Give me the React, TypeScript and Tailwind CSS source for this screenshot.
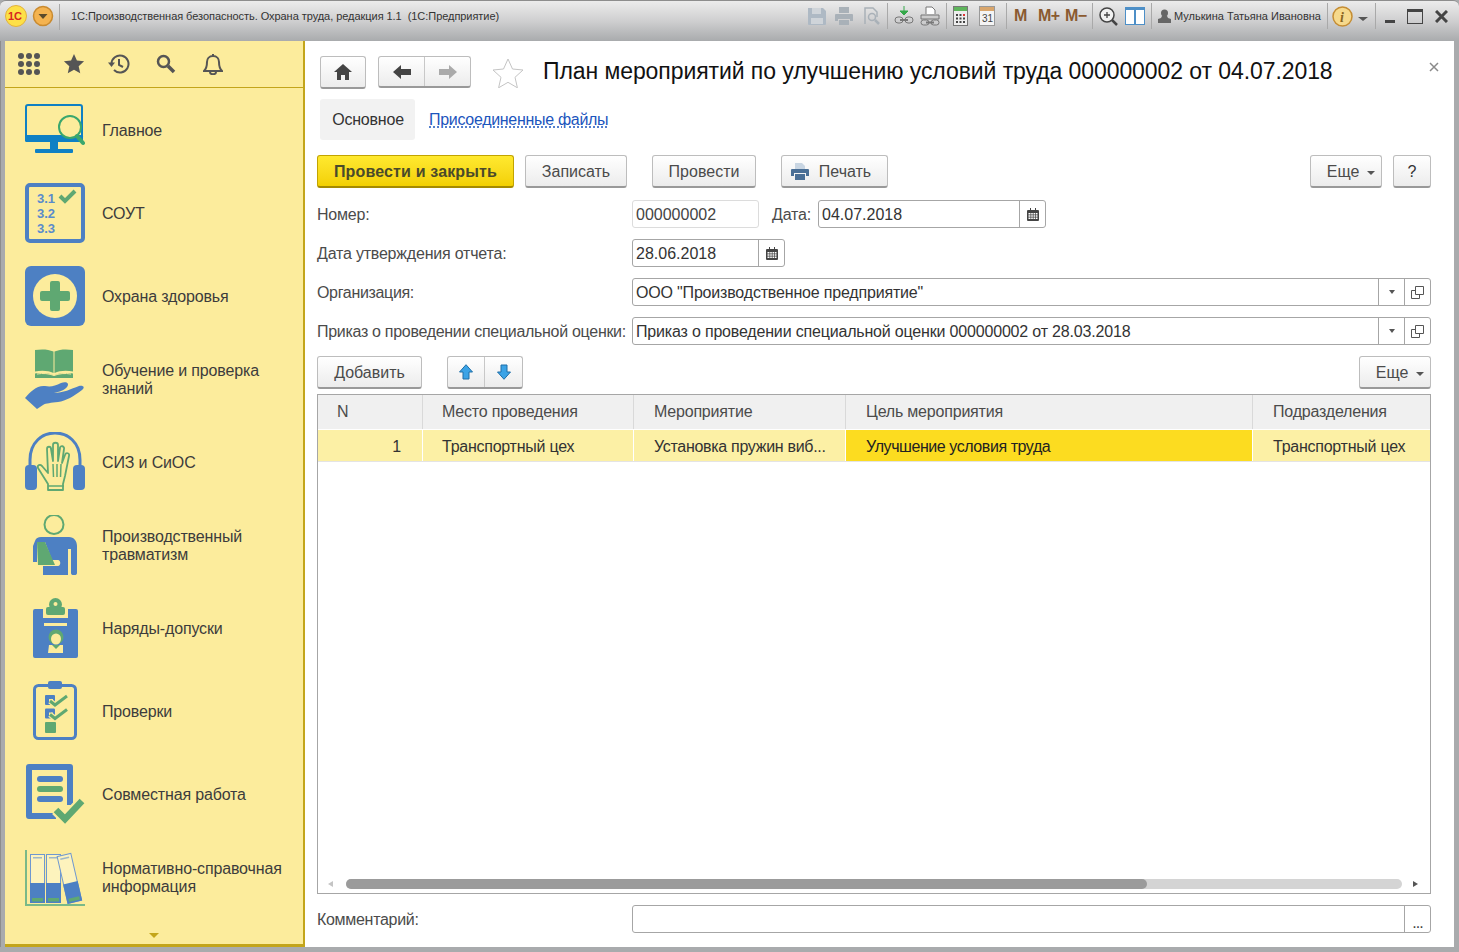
import React from "react";

const BLUE = "#4d80c3";
const GREEN = "#5fa872";
const YEL = "#fcec9c";

function Btn({ className = "", primary = false, children }: { className?: string; primary?: boolean; children: React.ReactNode }) {
  const tone = primary
    ? "border-[#c2a400] border-b-[#a58a00] from-[#ffe92e] to-[#f3d000] text-[#4a4a2a]"
    : "border-[#bdbdbd] border-b-[#999] from-white to-[#ececec] text-[#4b4b4b]";
  return (
    <div className={`flex h-[33px] items-center justify-center rounded-[3px] border border-b-2 bg-linear-to-b tracking-normal ${tone} ${className}`}>
      {children}
    </div>
  );
}

function Caret() {
  return <span className="ml-2 mt-[2px] h-0 w-0 border-x-[4px] border-t-[4px] border-x-transparent border-t-[#555]" />;
}

function Calendar() {
  return (
    <svg width="12" height="13" viewBox="0 0 12 13" fill="#444">
      <path d="M1 2h2V0h1v2h4V0h1v2h2a1 1 0 0 1 1 1v9a1 1 0 0 1-1 1H1a1 1 0 0 1-1-1V3a1 1 0 0 1 1-1z" />
      <path
        fill="#fff"
        d="M1.5 5h2v1.5h-2zM4.2 5h1.6v1.5H4.200zM6.500 5h1.500v1.500H6.500zM8.700 5h1.800v1.500H8.700zM1.500 7.300h2v1.500h-2zM4.200 7.300h1.600v1.500H4.200zM6.500 7.300h1.500v1.500H6.500zM8.700 7.300h1.800v1.500H8.700zM1.500 9.600h2v1.500h-2zM4.200 9.600h1.600v1.500H4.200zM6.500 9.600h1.500v1.500H6.500zM8.700 9.600h1.800v1.500H8.700z"
      />
    </svg>
  );
}

function OpenIcon() {
  return (
    <svg width="13" height="13" viewBox="0 0 13 13" fill="none" stroke="#555">
      <path d="M4.500 .5h8v8h-8z" />
      <path d="M4.500 4.500h-4v8h8v-4" />
    </svg>
  );
}

function SelectField({ value }: { value: string }) {
  return (
    <div className="ml-auto flex h-[28px] w-[799px] items-center rounded-[3px] border border-[#a6a6a6] text-[#333]">
      <span className="flex-1 pl-[3px] pt-[2px] tracking-[-0.18px]">{value}</span>
      <span className="flex h-full w-[26px] items-center justify-center border-l border-[#a6a6a6]">
        <span className="h-0 w-0 border-x-[3px] border-t-[4px] border-x-transparent border-t-[#555]" />
      </span>
      <span className="flex h-full w-[26px] items-center justify-center border-l border-[#a6a6a6]">
        <OpenIcon />
      </span>
    </div>
  );
}

function IconMain() {
  return (
    <svg width="60" height="60" viewBox="0 0 60 60" fill="none">
      <rect x="1" y="5" width="56" height="35" rx="2" stroke="#0f80c4" strokeWidth="2" />
      <rect x="0" y="35" width="58" height="7" rx="1.500" fill="#0f80c4" />
      <rect x="25" y="42" width="8" height="7" fill="#0f80c4" />
      <rect x="10" y="49" width="38" height="4" rx="1" fill="#0f80c4" />
      <circle cx="45" cy="27" r="11" fill={YEL} stroke="#3aa76d" strokeWidth="2" />
      <path d="M52 36l6 7" stroke="#3aa76d" strokeWidth="4" strokeLinecap="round" />
    </svg>
  );
}

function IconSout() {
  const rows = [
    ["3.1", 20],
    ["3.2", 35],
    ["3.3", 50],
  ] as const;
  return (
    <svg width="60" height="60" viewBox="0 0 60 60" fill="none">
      <rect x="2" y="2" width="56" height="56" rx="3" stroke={BLUE} strokeWidth="4" />
      {rows.map(([t, y]) => (
        <text key={t} x="12" y={y} fill="#5a8bcb" fontSize="13" fontWeight="700" fontFamily="'Liberation Sans', sans-serif">
          {t}
        </text>
      ))}
      <path d="M35 13l5 5 10-10" stroke={GREEN} strokeWidth="4" />
    </svg>
  );
}

function IconHealth() {
  return (
    <svg width="60" height="60" viewBox="0 0 60 60">
      <rect width="60" height="60" rx="6" fill={BLUE} />
      <circle cx="30" cy="30" r="22" fill={YEL} />
      <path d="M25 17a2 2 0 0 1 2-2h6a2 2 0 0 1 2 2v8h8a2 2 0 0 1 2 2v6a2 2 0 0 1-2 2h-8v8a2 2 0 0 1-2 2h-6a2 2 0 0 1-2-2v-8h-8a2 2 0 0 1-2-2v-6a2 2 0 0 1 2-2h8z" fill={GREEN} />
    </svg>
  );
}

function IconLearn() {
  return (
    <svg width="60" height="60" viewBox="0 0 60 60" fill="none">
      <path d="M10 1c6-1 13-1 18.500 1.500V24c-5-2.500-12-3-18.500-1.500zM48 1c-6-1-13-1-18.500 1.500V24c5-2.500 12-3 18.500-1.500z" fill={GREEN} />
      <path d="M10 24.500c6-1 14-.5 19 2 5-2.500 13-3 19-2V29H10z" fill={GREEN} />
      <path d="M12 25c6-1 12-.5 17 1.500 5-2 11-2.500 17-1.500" stroke={YEL} strokeWidth="1" />
      <path d="M0 49C5 43 12 36 20 37C26 38 30 37 36 34C41 32 45 34 42 38C40 41 34 43 29 44C38 44 46 40 54 37C59 36 60 39 57 41C49 47 41 52 33 53C26 54 21 54 18 56L12 60Z" fill={BLUE} />
    </svg>
  );
}

function IconSiz() {
  return (
    <svg width="60" height="60" viewBox="0 0 60 60" fill="none">
      <path d="M5 36V28C5 -8 55 -8 55 28V36" stroke={BLUE} strokeWidth="3" />
      <rect x="0" y="33" width="12" height="25" rx="4" fill={BLUE} />
      <rect x="48" y="33" width="12" height="25" rx="4" fill={BLUE} />
      <path
        d="M23 58V52L13 36c-1-3 2-4 4-2l6 7-1-24c0-3 4-3 4 0l2 12V13c0-3 5-3 5 0v16l2-13c0-3 5-2 4 1l-2 14 3-8c1-3 5-2 4 1l-4 20-2 8v6z"
        stroke={GREEN}
        strokeWidth="1.800"
        strokeLinejoin="round"
      />
      <path d="M23 54h16" stroke={GREEN} strokeWidth="1.500" />
      <path d="M28 32l.5 13M32 32v13M36 32l-.5 13" stroke={GREEN} strokeWidth="1.500" />
    </svg>
  );
}

function IconTrauma() {
  return (
    <svg width="60" height="60" viewBox="0 0 60 60" fill="none">
      <circle cx="29" cy="9.500" r="9.500" stroke={GREEN} strokeWidth="2" />
      <path d="M10 26C11 23 13 22 16 22H44C49 22 52 26 52 31V58C52 61 46 61 46 58V34H43V60H18V51H33C36 51 36 45 33 45H27L20 27H12V47H8V31Z" fill={BLUE} />
      <path d="M12 27h8l10 23H13z" fill={GREEN} />
    </svg>
  );
}

function IconPermit() {
  return (
    <svg width="60" height="60" viewBox="0 0 60 60">
      <path d="M10 11H18V20H43V11H51a2 2 0 0 1 2 2V58a2 2 0 0 1-2 2H10a2 2 0 0 1-2-2V13a2 2 0 0 1 2-2z" fill={BLUE} />
      <rect x="21" y="9" width="19" height="8" rx="2" fill={GREEN} />
      <circle cx="30.500" cy="6.500" r="6.500" fill={GREEN} />
      <circle cx="30.500" cy="6" r="2" fill={YEL} />
      <rect x="19" y="25" width="23" height="3" fill={YEL} />
      <circle cx="31" cy="39" r="7.500" fill={GREEN} />
      <ellipse cx="31" cy="41" rx="5" ry="5.500" fill={YEL} />
      <path d="M24 47h14v8H23z" fill={YEL} />
      <path d="M27 47h8l-4 4z" fill={GREEN} />
    </svg>
  );
}

function IconCheck() {
  return (
    <svg width="60" height="60" viewBox="0 0 60 60" fill="none">
      <rect x="9.500" y="4.500" width="41" height="53" rx="4" stroke={BLUE} strokeWidth="3" />
      <rect x="23" y="0" width="14" height="8" rx="2" fill={BLUE} />
      <rect x="20" y="14" width="10" height="10" rx="1" fill={BLUE} />
      <rect x="20" y="27.500" width="10" height="10" rx="1" fill={BLUE} />
      <rect x="24" y="18" width="4" height="3" fill={YEL} />
      <rect x="24" y="31.500" width="4" height="3" fill={YEL} />
      <path d="M25 20l5 4 12-9M25 33.500l5 4 12-9" stroke={YEL} strokeWidth="5.500" />
      <path d="M25 20l5 4 12-9M25 33.500l5 4 12-9" stroke={GREEN} strokeWidth="3" />
      <rect x="20" y="41" width="11" height="11" rx="1" fill={GREEN} />
    </svg>
  );
}

function IconJoint() {
  return (
    <svg width="60" height="60" viewBox="0 0 60 60" fill="none">
      <path d="M31 52H4V3H45V41" stroke={BLUE} strokeWidth="6" strokeLinejoin="round" />
      <rect x="12" y="12" width="26" height="6" rx="3" fill={BLUE} />
      <rect x="12" y="22" width="26" height="6" rx="3" fill={GREEN} />
      <rect x="12" y="32" width="26" height="6" rx="3" fill={BLUE} />
      <path d="M31 46L40 55L57 37" stroke={YEL} strokeWidth="11" />
      <path d="M31 46L40 55L57 37" stroke={GREEN} strokeWidth="6.500" />
    </svg>
  );
}

function Binder({ x }: { x: number }) {
  return (
    <g>
      <rect x={x + 0.5} y="7.500" width="14" height="48" fill="#fdf3bd" stroke="#6f98d0" />
      <rect x={x + 3} y="10" width="9" height="1.500" fill="#9fb8c8" />
      <rect x={x} y="36" width="15" height="20" fill={BLUE} />
      <rect x={x + 2} y="51" width="11" height="3.500" fill={GREEN} />
    </g>
  );
}

function IconRefs() {
  return (
    <svg width="60" height="60" viewBox="0 0 60 60" fill="none">
      <path d="M1 3v55h59" stroke="#7ab988" strokeWidth="2" />
      <Binder x={5} />
      <Binder x={21} />
      <g transform="rotate(-13 44 32)">
        <Binder x={37} />
      </g>
    </svg>
  );
}

const NAV: [React.ReactNode, string[]][] = [
  [<IconMain />, ["Главное"]],
  [<IconSout />, ["СОУТ"]],
  [<IconHealth />, ["Охрана здоровья"]],
  [<IconLearn />, ["Обучение и проверка", "знаний"]],
  [<IconSiz />, ["СИЗ и СиОС"]],
  [<IconTrauma />, ["Производственный", "травматизм"]],
  [<IconPermit />, ["Наряды-допуски"]],
  [<IconCheck />, ["Проверки"]],
  [<IconJoint />, ["Совместная работа"]],
  [<IconRefs />, ["Нормативно-справочная", "информация"]],
];

function Sep({ className = "" }: { className?: string }) {
  return <span className={`h-[26px] w-px bg-[#a9a9a9] ${className}`} />;
}

function TitleBar() {
  return (
    <div className="flex h-[41px] shrink-0 items-start rounded-t-[6px] border-t border-[#8d8d8d] bg-linear-to-b from-[#ececec] via-[#cfcfd0] to-[#a9abad] pt-[2px]">
      <svg className="ml-[5px] mt-[2px]" width="22" height="22" viewBox="0 0 22 22">
        <circle cx="11" cy="11" r="10.500" fill="#fde047" stroke="#e2b13c" />
        <text x="3" y="15" fontSize="11" fontWeight="700" fill="#d7261e" fontFamily="'Liberation Sans', sans-serif">
          1С
        </text>
      </svg>
      <svg className="ml-[5px] mt-[2px]" width="22" height="22" viewBox="0 0 22 22">
        <circle cx="11" cy="11" r="9.500" fill="#f4b350" stroke="#c98a2f" strokeWidth="1.500" />
        <path d="M6.500 9h9L11 14z" fill="#5b4a2b" />
      </svg>
      <Sep className="ml-[5px] mt-[1px]" />
      <span className="ml-[11px] mt-[5px] whitespace-pre text-[11px] leading-[16px] tracking-[-0.05px] text-[#333]">
        1С:Производственная безопасность. Охрана труда, редакция 1.1  (1С:Предприятие)
      </span>

      <div className="ml-auto flex items-center">
        <svg width="18" height="18" viewBox="0 0 18 18" fill="#aeb9c4">
          <path d="M0 1h15l3 3v13a1 1 0 0 1-1 1H1a1 1 0 0 1-1-1z" />
          <path d="M4 1h9v6H4zM3 11h12v6H3z" fill="#cfd4d9" />
        </svg>
        <svg className="ml-[9px]" width="18" height="18" viewBox="0 0 18 18" fill="#a9b1b8">
          <path d="M4 0h10v6H4zM1 7h16a1 1 0 0 1 1 1v6h-3v-2H3v2H0V8a1 1 0 0 1 1-1zM4 13h10v5H4z" />
        </svg>
        <svg className="ml-[10px]" width="18" height="18" viewBox="0 0 18 18" fill="none" stroke="#a9b1b8" strokeWidth="1.500">
          <path d="M2 17V1h8l4 4v5" />
          <circle cx="9" cy="10" r="3.500" />
          <path d="M12 13l4 4" strokeWidth="2.500" />
        </svg>
        <Sep className="ml-[6px]" />
        <svg className="ml-[6px]" width="20" height="20" viewBox="0 0 20 20" fill="none" stroke="#777">
          <path d="M10 0v5H6l4 4 4-4h-4" fill="#35a84a" stroke="#35a84a" />
          <rect x="1" y="11" width="8" height="6" rx="3" />
          <rect x="11" y="11" width="8" height="6" rx="3" />
          <path d="M6 14h8" strokeWidth="2" />
        </svg>
        <svg className="ml-[6px]" width="20" height="20" viewBox="0 0 20 20" fill="none" stroke="#777">
          <path d="M6 8V1h6l3 3v4" fill="#fff" />
          <path d="M1 9h18v4H1z" fill="#ccc" />
          <rect x="1" y="14" width="8" height="5" rx="2.500" />
          <rect x="11" y="14" width="8" height="5" rx="2.500" />
          <path d="M6 16.500h8" strokeWidth="2" />
        </svg>
        <Sep className="ml-[6px]" />
        <svg className="ml-[6px]" width="15" height="20" viewBox="0 0 15 20">
          <rect x=".5" y=".5" width="14" height="19" fill="#eee" stroke="#777" />
          <rect x="1" y="1" width="13" height="4" fill="#5fb55c" />
          <path d="M3 8h2v2H3zM6.500 8h2v2h-2zM3 11.500h2v2H3zM6.500 11.500h2v2h-2zM10 11.500h2v2h-2zM3 15h2v2H3zM6.500 15h2v2h-2zM10 15h2v2h-2z" fill="#444" />
          <path d="M10 8h2v2h-2z" fill="#d33" />
        </svg>
        <svg className="ml-[11px]" width="16" height="20" viewBox="0 0 16 20">
          <rect x=".5" y=".5" width="15" height="19" fill="#f4f4f4" stroke="#999" />
          <rect x="1" y="1" width="14" height="4" fill="#d9a66c" />
          <text x="3" y="16" fontSize="10" fill="#444" fontFamily="'Liberation Sans', sans-serif">
            31
          </text>
        </svg>
        <Sep className="ml-[11px]" />
        <span className="ml-[7px] w-[24px] text-[16px] font-bold leading-none text-[#8a5a30]">M</span>
        <span className="w-[27px] text-[16px] font-bold leading-none tracking-[-0.5px] text-[#8a5a30]">M+</span>
        <span className="w-[27px] text-[16px] font-bold leading-none tracking-[-0.5px] text-[#8a5a30]">M−</span>
        <Sep />
        <svg className="ml-[6px]" width="19" height="19" viewBox="0 0 19 19" fill="none" stroke="#444">
          <circle cx="8" cy="8" r="7" fill="#f2f2f2" strokeWidth="1.500" />
          <path d="M5 8h6M8 5v6" strokeWidth="1.300" />
          <path d="M13 13l5 5" strokeWidth="2.500" />
        </svg>
        <svg className="ml-[7px]" width="20" height="18" viewBox="0 0 20 18" fill="#fff" stroke="#4d8fc7">
          <rect x=".5" y=".5" width="19" height="17" strokeWidth="1" />
          <rect x=".5" y=".5" width="19" height="2" fill="#4d8fc7" />
          <path d="M10 1v17" strokeWidth="2" />
        </svg>
        <Sep className="ml-[6px]" />
        <svg className="ml-[6px]" width="13" height="14" viewBox="0 0 13 14" fill="#666">
          <circle cx="6.500" cy="4" r="3.500" />
          <path d="M4 7h5l1 2 3 1v4H0v-4l3-1z" />
        </svg>
        <span className="ml-[3px] w-[150px] whitespace-nowrap text-[11px] leading-none text-[#333]">
          Мулькина Татьяна Ивановна
        </span>
        <Sep className="ml-[3px]" />
        <svg className="ml-[4px]" width="21" height="21" viewBox="0 0 21 21">
          <circle cx="10.500" cy="10.500" r="9.500" fill="#f6d98c" stroke="#c58d33" strokeWidth="1.500" />
          <text x="8" y="16" fontSize="14" fontWeight="700" fontStyle="italic" fill="#8a6420" fontFamily="'Liberation Serif', serif">
            i
          </text>
        </svg>
        <span className="ml-[5px] mt-[6px] h-0 w-0 border-x-[5px] border-t-[4px] border-x-transparent border-t-[#555]" />
        <Sep className="ml-[7px]" />
        <span className="ml-[9px] mt-[10px] h-[3px] w-[10px] bg-[#444]" />
        <span className="ml-[12px] h-[15px] w-[16px] border border-t-[3px] border-[#444]" />
        <svg className="ml-[12px] mr-[11px]" width="13" height="13" viewBox="0 0 13 13" stroke="#444" strokeWidth="3">
          <path d="M1 1l11 11M12 1L1 12" />
        </svg>
      </div>
    </div>
  );
}

function Sidebar() {
  return (
    <aside className="relative flex w-[300px] shrink-0 flex-col border-r-2 border-b-[3px] border-[#c3a51b] bg-[#fcec9c]">
      <div className="flex h-[47px] shrink-0 items-center border-b border-[#c3a51b] pl-[13px] pb-[1px]">
        <svg width="22" height="22" viewBox="0 0 22 22" fill="#555">
          {[3, 11, 19].flatMap((y) =>
            [3, 11, 19].map((x) => <circle key={`${x}-${y}`} cx={x} cy={y} r="3" />),
          )}
        </svg>
        <svg className="ml-[23px]" width="22" height="22" viewBox="0 0 24 24" fill="#555">
          <path d="M12 1l3.200 7.300 7.800.8-5.900 5.300 1.700 7.800L12 18.200l-6.800 4 1.700-7.800L1 9.100l7.800-.8z" />
        </svg>
        <svg className="ml-[23px]" width="22" height="22" viewBox="0 0 22 22" fill="none" stroke="#555" strokeWidth="2">
          <path d="M3.500 11a8.500 8.500 0 1 1 2.500 6" />
          <path d="M11 6v6l4 2" />
          <path d="M0 9.500h7L3.500 14z" fill="#555" stroke="none" />
        </svg>
        <svg className="ml-[26px]" width="20" height="20" viewBox="0 0 20 20" fill="none" stroke="#555">
          <circle cx="7.500" cy="7.500" r="5.500" strokeWidth="2.500" />
          <path d="M12 12l6 6" strokeWidth="3.500" />
        </svg>
        <svg className="ml-[27px]" width="20" height="22" viewBox="0 0 20 22" fill="none" stroke="#555" strokeWidth="2">
          <path d="M10 3c-4 0-6 3-6 6 0 5-1 7-3 9h18c-2-2-3-4-3-9 0-3-2-6-6-6zM10 1v2" />
          <path d="M7 19c0 3 6 3 6 0" />
        </svg>
      </div>
      <nav className="flex flex-col">
        {NAV.map(([icon, lines]) => (
          <div key={lines[0]} className="flex h-[83px] items-center pl-[20px]">
            {icon}
            <div className="ml-[17px] pt-[2px] text-[16px] leading-[18px] tracking-[-0.15px] text-[#3c3c3c]">
              {lines.map((l) => (
                <div key={l}>{l}</div>
              ))}
            </div>
          </div>
        ))}
      </nav>
      <span className="absolute bottom-[6px] left-[144px] h-0 w-0 border-x-[5px] border-t-[5px] border-x-transparent border-t-[#c3a51b]" />
    </aside>
  );
}

function Form() {
  return (
    <main className="flex min-w-0 flex-1 flex-col bg-white pl-[12px] pr-[23px] text-[16px] tracking-[-0.2px] text-[#4b4b4b]">
      <div className="relative mt-[15px] flex h-[32px] items-center pl-[3px]">
        <Btn className="h-[32px] w-[46px]">
          <svg width="18" height="16" viewBox="0 0 18 16" fill="#444">
            <path d="M9 0l9 8h-3v8h-4v-5H7v5H3V8H0z" />
          </svg>
        </Btn>
        <div className="ml-[12px] flex h-[32px] w-[93px] rounded-[3px] border border-[#bdbdbd] border-b-2 border-b-[#999] bg-linear-to-b from-white to-[#ececec]">
          <span className="flex flex-1 items-center justify-center border-r border-[#c8c8c8]">
            <svg width="18" height="14" viewBox="0 0 18 14" fill="#444">
              <path d="M0 7l8-7v4h10v6H8v4z" />
            </svg>
          </span>
          <span className="flex flex-1 items-center justify-center">
            <svg width="18" height="14" viewBox="0 0 18 14" fill="#aaa">
              <path d="M18 7l-8-7v4H0v6h10v4z" />
            </svg>
          </span>
        </div>
        <svg className="ml-[21px] mt-[2px]" width="32" height="30" viewBox="0 0 32 30" fill="none" stroke="#c4c4c4">
          <path d="M16 1l4.500 10 10.500 1-8 7.300 2.400 10.500L16 24.300 6.600 29.800 9 19.300 1 12l10.500-1z" />
        </svg>
        <h1 className="ml-[19px] -mt-[2px] whitespace-nowrap text-[23px] font-normal tracking-[-0.08px] text-[#111]">
          План мероприятий по улучшению условий труда 000000002 от 04.07.2018
        </h1>
        <svg className="absolute right-[-8px] top-[6px]" width="10" height="10" viewBox="0 0 10 10" stroke="#8a8a8a" strokeWidth="1.500">
          <path d="M1 1l8 8M9 1L1 9" />
        </svg>
      </div>

      <div className="mt-[11px] flex h-[41px] items-center pl-[3px]">
        <span className="flex h-full w-[95px] items-center justify-center rounded-[3px] bg-[#f2f2f2] pl-[1px] text-[#333]">Основное</span>
        <span className="ml-[14px] tracking-[-0.3px] text-[#1c55bd] underline decoration-dotted underline-offset-2">Присоединенные файлы</span>
      </div>

      <div className="mt-[15px] flex">
        <Btn primary className="w-[197px] pt-[2px] font-bold">
          <span className="tracking-[0.15px]">Провести и закрыть</span>
        </Btn>
        <Btn className="ml-[11px] w-[102px] pt-[2px]">Записать</Btn>
        <Btn className="ml-[25px] w-[104px] pt-[2px]">Провести</Btn>
        <Btn className="ml-[25px] w-[107px] pt-[2px] pr-[7px]">
          <svg className="mr-[10px] -mt-[2px]" width="18" height="17" viewBox="0 0 18 17" fill="#4a6f96">
            <path d="M4 0h7l3 3v4H4z" fill="#c9d6e3" />
            <path d="M1 6h16a1 1 0 0 1 1 1v6h-3v-3H3v3H0V7a1 1 0 0 1 1-1zM4 11h10v6H4z" />
          </svg>
          Печать
        </Btn>
        <Btn className="ml-auto w-[72px] pt-[2px] pl-[10px]">
          Еще
          <Caret />
        </Btn>
        <Btn className="ml-[11px] w-[38px] pt-[2px] text-[#333]">?</Btn>
      </div>

      <div className="mt-[12px] flex h-[28px] items-center">
        <span className="w-[315px] pt-[2px]">Номер:</span>
        <div className="flex h-full w-[127px] items-center rounded-[3px] border border-[#dcdcdc] pl-[3px] pt-[2px] tracking-normal text-[#444]">000000002</div>
        <span className="ml-[13px] w-[46px] pt-[2px]">Дата:</span>
        <div className="flex h-full w-[228px] items-center rounded-[3px] border border-[#a6a6a6] pl-[3px] tracking-normal text-[#333]">
          <span className="flex-1 pt-[2px]">04.07.2018</span>
          <span className="flex h-full w-[26px] items-center justify-center border-l border-[#a6a6a6]">
            <Calendar />
          </span>
        </div>
      </div>

      <div className="mt-[11px] flex h-[28px] items-center">
        <span className="w-[315px] pt-[2px]">Дата утверждения отчета:</span>
        <div className="flex h-full w-[153px] items-center rounded-[3px] border border-[#a6a6a6] pl-[3px] tracking-normal text-[#333]">
          <span className="flex-1 pt-[2px]">28.06.2018</span>
          <span className="flex h-full w-[26px] items-center justify-center border-l border-[#a6a6a6]">
            <Calendar />
          </span>
        </div>
      </div>

      <div className="mt-[11px] flex h-[28px] items-center">
        <span className="pt-[2px] tracking-[-0.33px]">Организация:</span>
        <SelectField value={'ООО "Производственное предприятие"'} />
      </div>

      <div className="mt-[11px] flex h-[28px] items-center">
        <span className="whitespace-nowrap pt-[2px] tracking-[-0.3px]">Приказ о проведении специальной оценки:</span>
        <SelectField value="Приказ о проведении специальной оценки 000000002 от 28.03.2018" />
      </div>

      <div className="mt-[11px] flex">
        <Btn className="w-[105px] pt-[2px]">Добавить</Btn>
        <div className="ml-[25px] flex h-[33px] w-[76px] rounded-[3px] border border-[#bdbdbd] border-b-2 border-b-[#999] bg-linear-to-b from-white to-[#ececec]">
          <span className="flex w-[37px] items-center justify-center border-r border-[#c8c8c8]">
            <svg width="14" height="16" viewBox="0 0 14 16" fill="#3ba3e6" stroke="#1f6fa8">
              <path d="M7 .7L13.500 8H10v7H4V8H.5z" />
            </svg>
          </span>
          <span className="flex flex-1 items-center justify-center">
            <svg width="14" height="16" viewBox="0 0 14 16" fill="#3ba3e6" stroke="#1f6fa8">
              <path d="M7 15.300L13.500 8H10V1H4v7H.5z" />
            </svg>
          </span>
        </div>
        <Btn className="ml-auto w-[72px] pt-[2px] pl-[10px]">
          Еще
          <Caret />
        </Btn>
      </div>

      <div className="mt-[5px] flex h-[500px] flex-col border border-[#a6a6a6]">
        <div className="grid h-[35px] shrink-0 grid-cols-[105px_211px_212px_407px_177px] border-b border-white bg-[#f0f0f0]">
          {["N", "Место проведения", "Мероприятие", "Цель мероприятия", "Подразделения"].map((h, i) => (
            <div key={h} className={`flex items-center border-r border-[#d9d9d9] last:border-r-0 ${i < 2 ? "pl-[19px]" : "pl-[20px]"}`}>
              {h}
            </div>
          ))}
        </div>
        <div className="grid h-[32px] shrink-0 grid-cols-[105px_211px_212px_407px_177px] border-b border-[#e4e4e4] bg-[#fcf0a5] text-[#333]">
          <div className="flex items-center justify-end border-r border-white pr-[21px] pt-[2px]">1</div>
          <div className="flex items-center border-r border-white pl-[19px] pt-[2px] tracking-[-0.25px]">Транспортный цех</div>
          <div className="flex items-center border-r border-white pl-[20px] pt-[2px] tracking-[-0.3px]">Установка пружин виб...</div>
          <div className="flex items-center border-r border-white bg-[#fcdc20] pl-[20px] pt-[2px] tracking-[-0.43px] text-[#222]">Улучшение условия труда</div>
          <div className="flex items-center pl-[20px] pt-[2px] tracking-[-0.25px]">Транспортный цех</div>
        </div>
        <div className="mt-auto mb-[4px] flex h-[10px] items-center">
          <span className="ml-[10px] h-0 w-0 border-y-[3px] border-r-[5px] border-y-transparent border-r-[#c4c4c4]" />
          <div className="ml-[13px] h-[10px] w-[1056px] rounded-full bg-[#d4d4d4]">
            <div className="h-full w-[801px] rounded-full bg-[#9b9b9b]" />
          </div>
          <span className="ml-[11px] h-0 w-0 border-y-[3px] border-l-[5px] border-y-transparent border-l-[#555]" />
        </div>
      </div>

      <div className="mt-[11px] flex h-[28px] items-center">
        <span className="pt-[2px] tracking-[-0.3px]">Комментарий:</span>
        <div className="ml-auto flex h-full w-[799px] items-center justify-end rounded-[3px] border border-[#a6a6a6]">
          <span className="flex h-full w-[26px] items-end justify-center border-l border-[#a6a6a6] pb-[1px] leading-none tracking-[-1px] text-[#444]">...</span>
        </div>
      </div>
    </main>
  );
}

export default function App() {
  return (
    <div className="flex h-[952px] w-[1459px] flex-col overflow-hidden bg-[#a9abad] font-['Liberation_Sans',Arial,sans-serif]">
      <TitleBar />
      <div className="flex h-[906px] border-l border-[#8d8d8d] pl-[4px] pr-[5px]">
        <Sidebar />
        <Form />
      </div>
    </div>
  );
}
